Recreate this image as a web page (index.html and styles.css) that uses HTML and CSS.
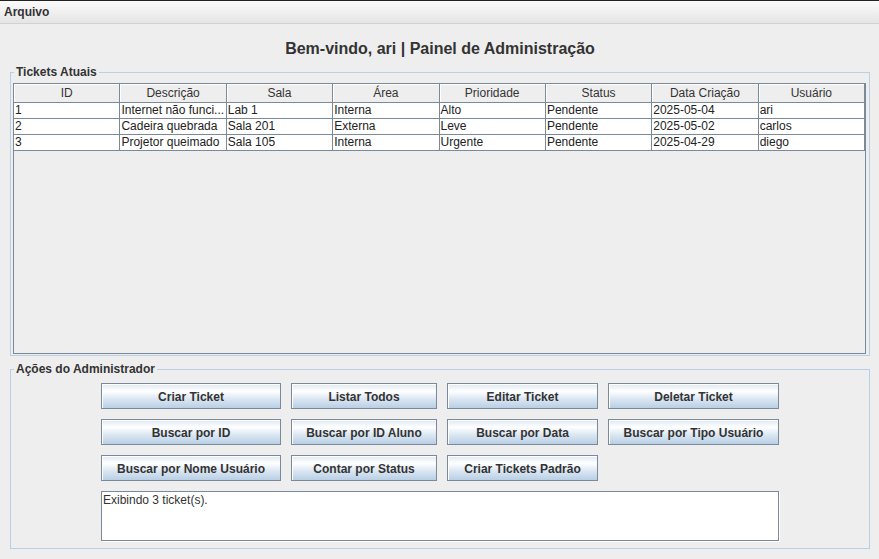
FILE: index.html
```html
<!DOCTYPE html>
<html lang="pt">
<head>
<meta charset="utf-8">
<title>Painel de Administração</title>
<link rel="stylesheet" href="styles.css">
</head>
<body>
<div class="menubar"><span class="menu">Arquivo</span></div>
<main class="content">
  <h1 class="title">Bem-vindo, ari | Painel de Administração</h1>
  <fieldset class="group tickets">
    <legend class="group-title">Tickets Atuais</legend>
    <div class="scroll">
      <div class="row head">
        <div class="hcell">ID</div>
        <div class="hcell">Descrição</div>
        <div class="hcell">Sala</div>
        <div class="hcell">Área</div>
        <div class="hcell">Prioridade</div>
        <div class="hcell">Status</div>
        <div class="hcell">Data Criação</div>
        <div class="hcell">Usuário</div>
      </div>
      <div class="row">
        <div class="cell">1</div>
        <div class="cell">Internet não funci...</div>
        <div class="cell">Lab 1</div>
        <div class="cell">Interna</div>
        <div class="cell">Alto</div>
        <div class="cell">Pendente</div>
        <div class="cell">2025-05-04</div>
        <div class="cell">ari</div>
      </div>
      <div class="row">
        <div class="cell">2</div>
        <div class="cell">Cadeira quebrada</div>
        <div class="cell">Sala 201</div>
        <div class="cell">Externa</div>
        <div class="cell">Leve</div>
        <div class="cell">Pendente</div>
        <div class="cell">2025-05-02</div>
        <div class="cell">carlos</div>
      </div>
      <div class="row">
        <div class="cell">3</div>
        <div class="cell">Projetor queimado</div>
        <div class="cell">Sala 105</div>
        <div class="cell">Interna</div>
        <div class="cell">Urgente</div>
        <div class="cell">Pendente</div>
        <div class="cell">2025-04-29</div>
        <div class="cell">diego</div>
      </div>
    </div>
  </fieldset>
  <fieldset class="group actions">
    <legend class="group-title">Ações do Administrador</legend>
    <div class="btn-grid">
      <button class="btn">Criar Ticket</button>
      <button class="btn">Listar Todos</button>
      <button class="btn">Editar Ticket</button>
      <button class="btn">Deletar Ticket</button>
      <button class="btn">Buscar por ID</button>
      <button class="btn">Buscar por ID Aluno</button>
      <button class="btn">Buscar por Data</button>
      <button class="btn">Buscar por Tipo Usuário</button>
      <button class="btn">Buscar por Nome Usuário</button>
      <button class="btn">Contar por Status</button>
      <button class="btn">Criar Tickets Padrão</button>
      <div class="output">Exibindo 3 ticket(s).</div>
    </div>
  </fieldset>
</main>
</body>
</html>
```

FILE: styles.css
```css
* { box-sizing: border-box; }
html, body {
  margin: 0;
  padding: 0;
  background: #eeeeee;
  font-family: "Liberation Sans", Arial, sans-serif;
  font-size: 12px;
  color: #333333;
  width: 879px;
  height: 559px;
  overflow: hidden;
}
.menubar {
  height: 24px;
  border-top: 1px solid #222222;
  border-bottom: 1px solid #d2d2d2;
  background: linear-gradient(to bottom, #fbfbfb 0%, #f0f0f0 50%, #e4e4e4 100%);
  padding: 0 4px;
  display: flex;
  align-items: center;
}
.menu {
  font-weight: bold;
  font-size: 12px;
  line-height: 14px;
  color: #333333;
}
.content {
  padding: 0 9px 0 10px;
}
.title {
  margin: 0;
  padding-top: 15px;
  font-size: 16px;
  line-height: 20px;
  font-weight: bold;
  text-align: center;
  color: #333333;
}
.group {
  margin: 6px 0 0 0;
  border: 1px solid #b8cfe5;
  min-width: 0;
}
.group-title {
  font-weight: bold;
  font-size: 12px;
  line-height: 14px;
  padding: 0 2px;
  margin-left: 1px;
  color: #333333;
}
.tickets {
  padding: 4px 3px 1px 2px;
}
.scroll {
  height: 271px;
  border: 1px solid #7a8a99;
  background: #eeeeee;
}
.row {
  display: grid;
  grid-template-columns: repeat(8, 1fr);
  height: 16px;
  background: #ffffff;
}
.row.head {
  height: 19px;
  background: #eeeeee;
}
.hcell {
  border-right: 1px solid #7a8a99;
  border-bottom: 1px solid #7a8a99;
  box-shadow: inset 1px 1px 0 #ffffff;
  text-align: center;
  line-height: 18px;
  white-space: nowrap;
  overflow: hidden;
}
.cell {
  border-right: 1px solid #7a8a99;
  border-bottom: 1px solid #7a8a99;
  padding-left: 1px;
  line-height: 15px;
  white-space: nowrap;
  overflow: hidden;
  color: #222222;
}
.actions {
  padding: 7px 2px 7px 2px;
}
.btn-grid {
  display: grid;
  grid-template-columns: 180px 146px 151px 171px;
  grid-template-rows: 26px 26px 26px 50px;
  gap: 10px;
  justify-content: center;
}
.btn {
  margin: 0;
  padding: 1px 0 0 0;
  border: 1px solid #7a8a99;
  box-shadow: inset 1px 1px 0 #ffffff;
  background: linear-gradient(to bottom, #dde8f3 0%, #ffffff 30%, #dde8f3 60%, #b8cfe5 100%);
  font-family: "Liberation Sans", Arial, sans-serif;
  font-weight: bold;
  font-size: 12px;
  color: #333333;
  white-space: nowrap;
}
.output {
  grid-column: 1 / -1;
  background: #ffffff;
  border: 1px solid #7a8a99;
  box-shadow: 1px 1px 0 #ffffff;
  padding: 0 0 0 1px;
  line-height: 16px;
  color: #333333;
}
```
